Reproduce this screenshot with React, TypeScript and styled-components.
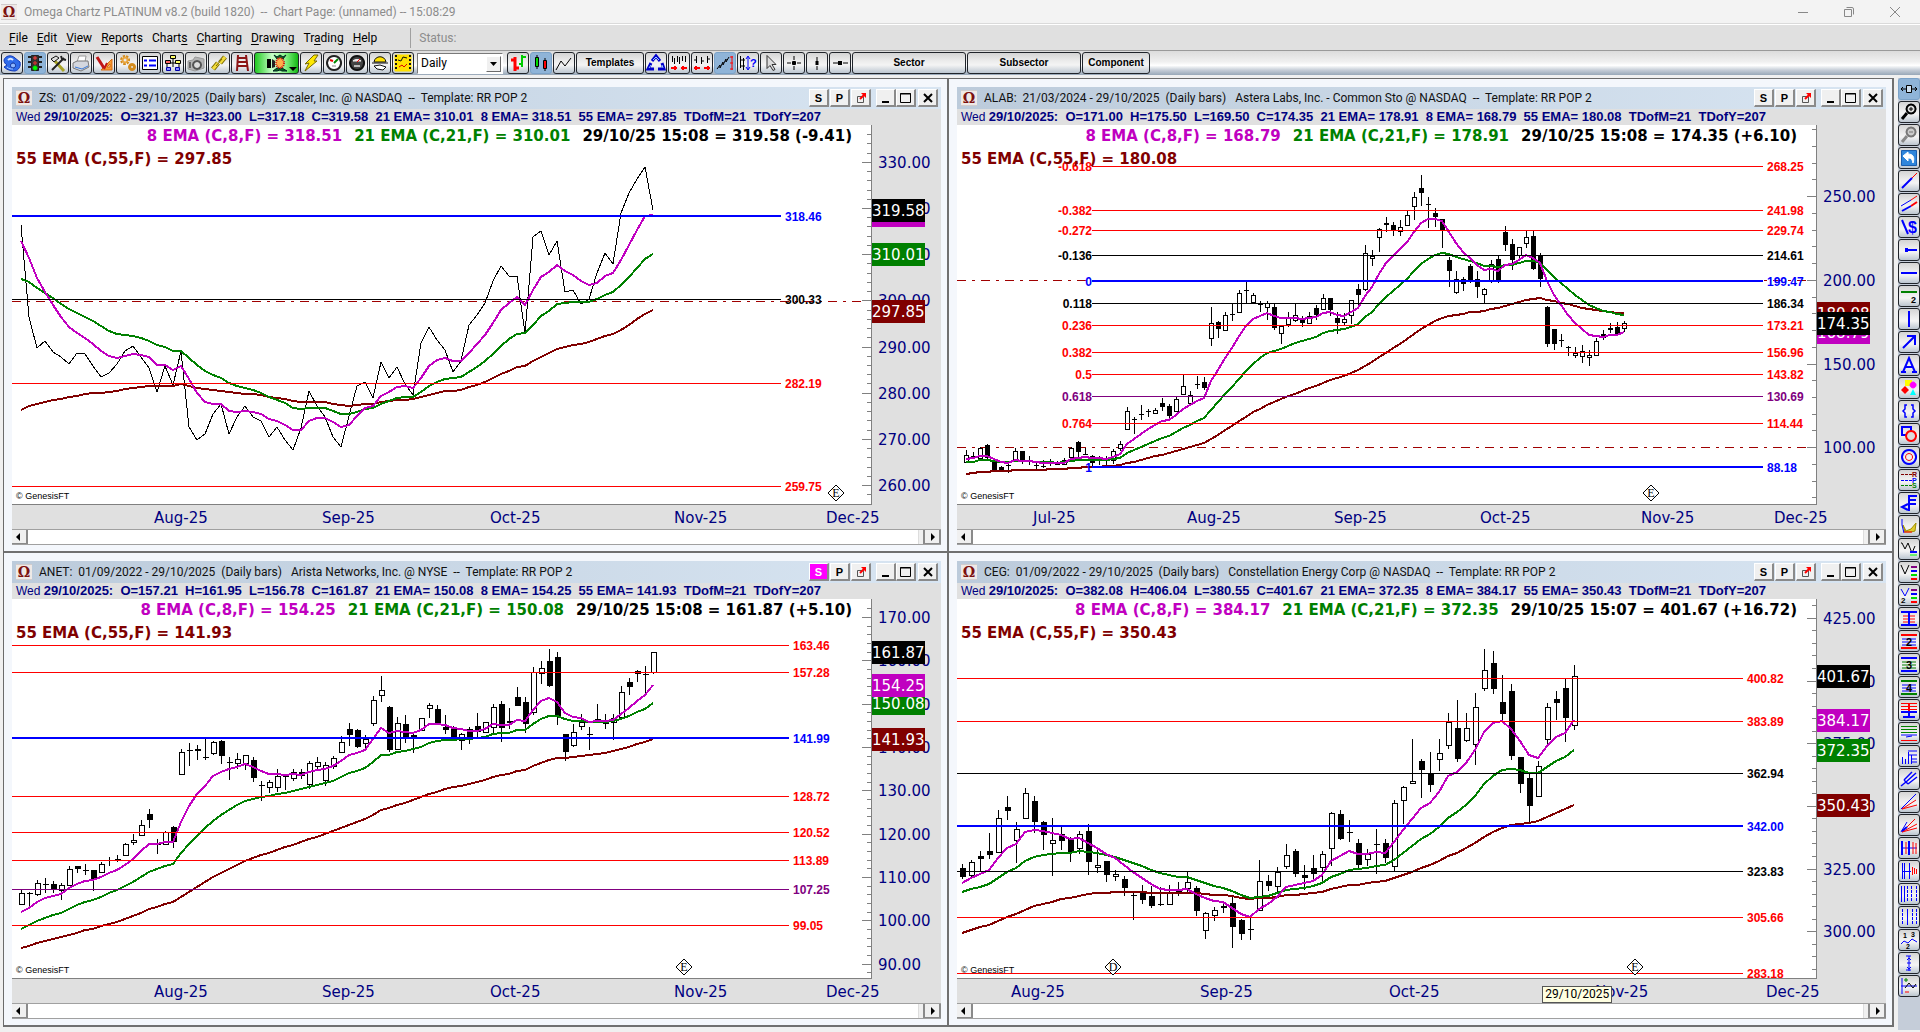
import React, { useLayoutEffect, useRef, useState } from 'react';
import styled, { createGlobalStyle } from 'styled-components';

/* ---------- theme values ---------- */
const UI = '"Segoe UI", Roboto, "Open Sans", sans-serif';
const SANS = 'Arial, "Liberation Sans", sans-serif';
const CASUAL = '"Comic Sans MS", "DejaVu Sans", sans-serif';
const NAVY = '#000080';
const MAROON = '#800000';
const GREEN = '#008000';
const MAGENTA = '#c000c0';
const RED = '#ff0000';
const BLUE = '#0000ff';
const PURPLE = '#800080';
const BLACK = '#000000';
const FACE = '#e0e0e0';

const Global = createGlobalStyle`
  * { box-sizing: border-box; }
  body { margin: 0; background: #f0f0f0; font: 12px/16px ${UI}; color: #000; }
  button, select { font: inherit; color: inherit; padding: 0; margin: 0; }
`;

/* ---------- shell ---------- */
const Shell = styled.div`
  min-height: 100vh;
  display: flex;
  flex-direction: column;
`;
const TitleBar = styled.header`
  height: 24px;
  flex: none;
  display: flex;
  align-items: center;
  gap: 7px;
  padding-left: 1px;
  background: #f3f3f3;
  border-bottom: 1px solid #dadada;
  color: #8c8c8c;
  white-space: pre;
`;
const WindowControls = styled.div`
  margin-left: auto;
  margin-right: 2px;
  display: flex;
`;
const CaptionButton = styled.button`
  width: 46px;
  height: 20px;
  border: 0;
  background: none;
  display: grid;
  place-items: center;
`;
const Omega = styled.span`
  width: 16px;
  height: 16px;
  flex: none;
  display: grid;
  place-items: center;
  background: #efe9e6;
  border-top: 1px solid #d2cccc;
  border-bottom: 1px solid #d2cccc;
  color: #7c1010;
  font: bold 14px/14px "DejaVu Serif", serif;
`;
const MenuBar = styled.nav`
  height: 27px;
  flex: none;
  display: flex;
  align-items: center;
  gap: 9px;
  padding-left: 9px;
  background: ${FACE};
  border-top: 1px solid #fff;
  border-bottom: 1px solid #9a9a9a;
`;
const MenuItem = styled.button`
  border: 0;
  background: none;
  u { text-underline-offset: 2px; }
`;
const Status = styled.span`
  margin-left: 24px;
  padding: 2px 0 2px 8px;
  border-left: 1px solid #a0a0a0;
  color: #8c8c8c;
`;
const Toolbar = styled.div`
  height: 24px;
  flex: none;
  display: flex;
  align-items: center;
  gap: 1px;
  padding: 0 1px;
  background: linear-gradient(#dcdcdc, #f0f0f0 45%, #fff 60%, #c4ccd6 80%, #98a8b8);
`;
const Tool = styled.button<{ $on?: boolean; $go?: boolean; $w?: number }>`
  width: ${(p) => p.$w ?? 22}px;
  height: 22px;
  flex: none;
  display: grid;
  place-items: center;
  border: 1px solid ${(p) => (p.$on ? '#7ba2c8' : '#20242a')};
  border-radius: 3px;
  background: ${(p) =>
    p.$on
      ? '#8fb4d8'
      : p.$go
        ? 'linear-gradient(90deg, #22c922, #c8ffc8 40%, #8cf58c 70%, #12b812)'
        : 'linear-gradient(#d4d4d4, #ececec 40%, #f4f4f4 60%, #bcc6d0)'};
  font: bold 10px/16px ${SANS};
`;
const PeriodBox = styled.span`
  position: relative;
  margin: 0 3px 0 2px;
  width: 86px;
  height: 21px;
`;
const PeriodSelect = styled.select`
  width: 100%;
  height: 100%;
  appearance: none;
  border: 1px solid #7a7a7a;
  border-right-color: #fff;
  border-bottom-color: #fff;
  border-radius: 0;
  background: #fff;
  padding-left: 3px;
  font: 12px/16px ${UI};
`;
const PeriodArrow = styled.span`
  position: absolute;
  right: 2px;
  top: 3px;
  width: 15px;
  height: 16px;
  display: grid;
  place-items: center;
  background: #f0f0f0;
  border: 1px solid #fff;
  border-right-color: #6a6a6a;
  border-bottom-color: #6a6a6a;
  pointer-events: none;
`;
const Body = styled.div`
  flex: 1;
  display: flex;
`;
const Workspace = styled.main`
  flex: 1;
  min-width: 0;
  display: flex;
  padding: 3px 4px 5px 3px;
`;
const Desk = styled.div`
  flex: 1;
  min-width: 0;
  display: grid;
  grid-template-columns: repeat(2, minmax(0, 1fr));
  grid-auto-rows: 1fr;
  border-left: 1px solid #6b6b6b;
  border-top: 1px solid #6b6b6b;
`;
const SideTools = styled.aside`
  width: 22px;
  flex: none;
  margin: 3px 0 2px;
  display: flex;
  flex-direction: column;
  gap: 1px;
  background: #c5cdd9;
`;

/* ---------- chart window ---------- */
const Frame = styled.section`
  display: flex;
  flex-direction: column;
  padding: 8px 6px 6px 8px;
  background: #f4f7fc;
  border: 0 solid #707070;
  border-right-width: 2px;
  border-bottom-width: 2px;
`;
const Caption = styled.div`
  height: 22px;
  flex: none;
  display: flex;
  align-items: center;
  padding: 0 3px 0 4px;
  background: linear-gradient(90deg, #bccbdb, #d8e5f2);
`;
const CaptionText = styled.h2`
  flex: 1;
  margin: 0 0 0 7px;
  min-width: 0;
  overflow: hidden;
  font: 12px/16px ${UI};
  color: #111;
  white-space: pre;
`;
const Group = styled.div<{ $gap: number }>`
  display: flex;
  gap: ${(p) => p.$gap}px;
  margin-left: 5px;
`;
const Bevel = styled.button<{ $hot?: boolean }>`
  width: 20px;
  height: 18px;
  flex: none;
  display: grid;
  place-items: center;
  border: 1px solid #fff;
  border-right: 2px solid #8a8a8a;
  border-bottom: 2px solid #8a8a8a;
  background: ${(p) => (p.$hot ? '#ff00ff' : '#f0f0f0')};
  color: ${(p) => (p.$hot ? '#fff' : '#000')};
  font: bold 11px/12px ${SANS};
`;
const CloseGap = styled.span`
  width: 2px;
`;
const InfoBar = styled.div`
  height: 16px;
  flex: none;
  padding-left: 4px;
  overflow: hidden;
  background: ${FACE};
  color: ${NAVY};
  font: bold 13px/16px ${SANS};
  white-space: pre;
`;
const Wed = styled.span`
  font-size: 12px;
  font-weight: 400;
`;
const Pane = styled.div`
  position: relative;
  flex: 1;
  min-height: 260px;
  min-width: 0;
  background: ${FACE};
`;
const Canvas = styled.svg`
  position: absolute;
  inset: 0;
  display: block;
  width: 100%;
  height: 100%;
  .axis { font: 15px ${CASUAL}; fill: ${NAVY}; }
  .tag { font: 15px ${CASUAL}; fill: #fff; }
  .level { font: bold 12px ${SANS}; }
  .mark { font: 12px "Liberation Serif", serif; }
  .credit { font: 9px ${SANS}; }
`;
const Legend = styled.div`
  position: absolute;
  left: 4px;
  right: 89px;
  top: 0;
  font: bold 15px/23px ${CASUAL};
  white-space: nowrap;
  pointer-events: none;
`;
const LegendRow = styled.div<{ $end?: boolean }>`
  display: flex;
  justify-content: ${(p) => (p.$end ? 'flex-end' : 'flex-start')};
  gap: 12px;
`;
const Study = styled.span<{ $c: string }>`
  color: ${(p) => p.$c};
`;
const DateTip = styled.div`
  position: absolute;
  left: 63%;
  bottom: 0;
  height: 17px;
  padding: 0 2px;
  border: 1px solid #555;
  background: #ffffe1;
  font: 12px/15px ${UI};
`;
const ScrollRow = styled.div`
  height: 16px;
  flex: none;
  display: flex;
  background: #fff;
  border-top: 1px solid #a0a0a0;
  border-bottom: 1px solid #a0a0a0;
`;
const ScrollTrack = styled.div`
  flex: 1;
  display: flex;
  justify-content: flex-end;
`;
const ScrollThumb = styled.span`
  width: 7px;
  background: #f0f0f0;
  border-left: 1px solid #ddd;
  border-right: 2px solid #8a8a8a;
`;
const ScrollButton = styled.button`
  width: 16px;
  border: 0;
  border-right: 2px solid #8a8a8a;
  border-bottom: 1px solid #8a8a8a;
  background: #f0f0f0;
  display: grid;
  place-items: center;
`;

/* ---------- chart data: drawing units are thirds of a pixel ---------- */
type Level = { y: number; c: string; text: string; ratio?: string; bold?: boolean };
type Tag = { y: number; c: string; text: string };
type Chart = {
  id: string;
  caption: string;
  info: string;
  hot?: boolean;
  legend: [string, string, string, string];
  dy: number;
  x0: number;
  step: number;
  seeds: [number, number, number];
  closes?: number[];
  candles?: number[];
  body: number;
  levels: Level[];
  levelX: [number, number];
  dashes: number[];
  axis: { top: number; y: number; by: number; step: number; count: number };
  tags: Tag[];
  months: [string, number][];
  marks: [string, number][];
  tip?: string;
};

const join = (...parts: [number, number[]][]) => parts.flatMap(([d, v]) => v.map((n) => n + d));

const charts: Chart[] = [
  {
    id: 'ZS',
    caption: 'ZS:  01/09/2022 - 29/10/2025  (Daily bars)   Zscaler, Inc. @ NASDAQ  --  Template: RR POP 2',
    info: '29/10/2025:  O=321.37  H=323.00  L=317.18  C=319.58  21 EMA= 310.01  8 EMA= 318.51  55 EMA= 297.85  TDofM=21  TDofY=207',
    legend: ['8 EMA (C,8,F) = 318.51', '21 EMA (C,21,F) = 310.01', '29/10/25 15:08 = 319.58 (-9.41)', '55 EMA (C,55,F) = 297.85'],
    dy: 105,
    x0: 28,
    step: 24,
    seeds: [245, 358, 750],
    body: 6,
    closes: join(
      [60, [135, 413, 504, 485, 517, 532, 553, 520, 523, 560, 592, 579, 553, 514, 499, 532, 565, 637, 560, 615, 515, 742, 780, 762, 703, 673, 764, 712, 679, 711, 724, 772, 742, 780, 811, 745, 634, 680, 712, 772, 802, 710, 618, 606, 655, 547, 595, 563, 612, 645, 490, 442, 480, 511, 577, 545]],
      [0, [495, 465, 430, 363, 320, 349, 349, 520, 232, 214, 286, 245, 398, 391, 432, 418, 340, 281, 313, 160, 100, 58, 22, 150]],
    ),
    levels: [
      { y: 168, c: BLUE, text: '318.46', bold: true },
      { y: 418, c: BLACK, text: '300.33' },
      { y: 670, c: RED, text: '282.19' },
      { y: 979, c: RED, text: '259.75' },
    ],
    levelX: [0, 2307],
    dashes: [424],
    axis: { top: 330, y: 7, by: 10, step: 138.5, count: 8 },
    tags: [
      { y: 166, c: MAGENTA, text: '318.51' },
      { y: 151, c: BLACK, text: '319.58' },
      { y: 283, c: GREEN, text: '310.01' },
      { y: 454, c: MAROON, text: '297.85' },
    ],
    months: [['Aug-25', 426], ['Sep-25', 930], ['Oct-25', 1434], ['Nov-25', 1986], ['Dec-25', 2442]],
    marks: [['E', 2473]],
  },
  {
    id: 'ALAB',
    caption: 'ALAB:  21/03/2024 - 29/10/2025  (Daily bars)   Astera Labs, Inc. - Common Sto @ NASDAQ  --  Template: RR POP 2',
    info: '29/10/2025:  O=171.00  H=175.50  L=169.50  C=174.35  21 EMA= 178.91  8 EMA= 168.79  55 EMA= 180.08  TDofM=21  TDofY=207',
    legend: ['8 EMA (C,8,F) = 168.79', '21 EMA (C,21,F) = 178.91', '29/10/25 15:08 = 174.35 (+6.10)', '55 EMA (C,55,F) = 180.08'],
    dy: 45,
    x0: 29,
    step: 21,
    seeds: [957, 968, 1002],
    body: 5,
    candles: [
      930, 968, 946, 970, 936, 948, 953, 958, 922, 956, 925, 962, 912, 915, 956, 960, 955, 965, 992, 996, 978, 982, 990, 993, 972, 977, 980, 1000, 925, 960, 934, 966,
      933, 935, 968, 974, 950, 965, 967, 976, 968, 976, 979, 995, 961, 979, 981, 986, 957, 969, 970, 980, 964, 973, 976, 977, 955, 974, 961, 976, 921, 952, 925, 956,
      903, 907, 938, 952, 926, 942, 944, 946, 946, 949, 970, 980, 950, 954, 956, 975, 950, 957, 961, 978, 928, 962, 934, 972, 903, 926, 913, 935, 802, 868, 814, 870,
      832, 838, 841, 884, 796, 823, 826, 842, 808, 815, 817, 832, 805, 821, 811, 824, 775, 790, 802, 814, 793, 799, 830, 837, 772, 815, 778, 818, 706, 763, 739, 766,
      753, 790, 766, 794, 709, 733, 736, 748, 712, 727, 746, 752, 502, 595, 550, 620, 544, 547, 569, 596, 517, 571, 526, 574, 490, 523, 525, 545, 451, 517, 460, 519,
      427, 451, 452, 490, 460, 488, 466, 492, 484, 493, 496, 518, 484, 502, 490, 542, 492, 502, 566, 572, 558, 580, 560, 614, 518, 553, 535, 562, 490, 542, 526, 548,
      528, 535, 551, 563, 517, 550, 529, 552, 497, 504, 527, 542, 463, 508, 475, 510, 474, 475, 512, 530, 518, 535, 551, 584, 520, 547, 538, 560, 480, 526, 482, 552,
      433, 448, 467, 505, 316, 448, 340, 453, 331, 355, 349, 380, 265, 292, 268, 336, 232, 250, 257, 278, 247, 256, 271, 290, 241, 274, 263, 290, 212, 256, 226, 260,
      157, 199, 172, 240, 105, 145, 160, 200, 171, 192, 194, 266, 205, 219, 233, 262, 237, 238, 270, 326, 352, 361, 395, 443, 393, 457, 418, 463, 412, 418, 433, 455,
      372, 379, 428, 431, 394, 418, 443, 476, 445, 463, 448, 490, 361, 420, 373, 430, 348, 358, 422, 431, 259, 277, 317, 335, 297, 312, 362, 392, 322, 346, 323, 358,
      271, 311, 292, 325, 273, 289, 389, 391, 340, 346, 419, 443, 500, 502, 613, 623, 568, 568, 614, 632, 583, 600, 604, 623, 619, 622, 624, 650, 622, 646, 640, 656,
      616, 650, 634, 671, 631, 653, 647, 680, 595, 646, 604, 648, 571, 583, 595, 602, 550, 565, 571, 580, 548, 562, 586, 590, 543, 566, 550, 578,
    ],
    levels: [
      { y: 79, c: RED, text: '268.25', ratio: '-0.618' },
      { y: 211, c: RED, text: '241.98', ratio: '-0.382' },
      { y: 271, c: RED, text: '229.74', ratio: '-0.272' },
      { y: 346, c: BLACK, text: '214.61', ratio: '-0.136' },
      { y: 423, c: BLUE, text: '199.47', ratio: '0', bold: true },
      { y: 490, c: BLACK, text: '186.34', ratio: '0.118' },
      { y: 556, c: RED, text: '173.21', ratio: '0.236' },
      { y: 637, c: RED, text: '156.96', ratio: '0.382' },
      { y: 703, c: RED, text: '143.82', ratio: '0.5' },
      { y: 769, c: PURPLE, text: '130.69', ratio: '0.618' },
      { y: 850, c: RED, text: '114.44', ratio: '0.764' },
      { y: 981, c: BLUE, text: '88.18', ratio: '1', bold: true },
    ],
    levelX: [405, 2420],
    dashes: [421, 922],
    axis: { top: 250, y: 170, by: 50, step: 251, count: 4 },
    tags: [
      { y: 520, c: MAROON, text: '180.08' },
      { y: 577, c: MAGENTA, text: '168.79' },
      { y: 550, c: BLACK, text: '174.35' },
    ],
    months: [['Jul-25', 230], ['Aug-25', 691], ['Sep-25', 1131], ['Oct-25', 1571], ['Nov-25', 2054], ['Dec-25', 2453]],
    marks: [['E', 2083]],
  },
  {
    id: 'ANET',
    caption: 'ANET:  01/09/2022 - 29/10/2025  (Daily bars)   Arista Networks, Inc. @ NYSE  --  Template: RR POP 2',
    info: '29/10/2025:  O=157.21  H=161.95  L=156.78  C=161.87  21 EMA= 150.08  8 EMA= 154.25  55 EMA= 141.93  TDofM=21  TDofY=207',
    hot: true,
    legend: ['8 EMA (C,8,F) = 154.25', '21 EMA (C,21,F) = 150.08', '29/10/25 15:08 = 161.87 (+5.10)', '55 EMA (C,55,F) = 141.93'],
    dy: -117,
    x0: 28,
    step: 24,
    seeds: [1056, 1107, 1164],
    body: 6,
    candles: [
      990, 1034, 1000, 1036, 997, 1000, 1002, 1042, 961, 1003, 970, 1010, 955, 974, 977, 1000, 963, 972, 988, 1000, 970, 990, 976, 1022, 919, 976, 928, 980, 918, 919, 929, 941,
      912, 931, 932, 947, 930, 930, 957, 993, 906, 938, 913, 941, 892, 902, 903, 918, 886, 898, 905, 908, 850, 886, 853, 889, 823, 847, 841, 857, 781, 826, 796, 830,
      748, 763, 782, 806, 838, 852, 853, 884, 814, 853, 818, 855, 800, 802, 848, 866, 568, 643, 577, 647, 550, 572, 574, 620, 556, 568, 574, 602, 536, 592, 593, 602,
      544, 580, 547, 586, 540, 544, 590, 614, 592, 607, 608, 661, 580, 610, 598, 627, 586, 610, 587, 632, 592, 601, 655, 668, 663, 675, 676, 725, 662, 682, 668, 701,
      628, 682, 649, 698, 645, 649, 652, 690, 628, 656, 638, 665, 628, 638, 650, 658, 605, 673, 610, 688, 592, 620, 607, 628, 608, 661, 616, 680, 589, 620, 595, 628,
      530, 577, 547, 581, 490, 508, 527, 560, 508, 511, 563, 566, 525, 550, 538, 566, 408, 490, 421, 499, 348, 406, 391, 428, 439, 442, 572, 576, 472, 568, 490, 571,
      466, 492, 535, 551, 518, 526, 532, 580, 476, 510, 476, 515, 430, 444, 436, 475, 436, 448, 490, 494, 466, 502, 510, 524, 500, 503, 532, 545, 520, 541, 523, 572,
      502, 508, 532, 553, 460, 499, 517, 532, 487, 517, 487, 520, 432, 502, 442, 520, 424, 432, 506, 548, 445, 484, 490, 508, 382, 411, 440, 440, 412, 427, 494, 521,
      322, 457, 338, 466, 304, 340, 325, 374, 268, 304, 380, 383, 277, 291, 470, 497, 522, 523, 577, 605, 493, 556, 517, 562, 463, 499, 487, 512, 502, 523, 524, 572,
      432, 478, 480, 485, 463, 490, 484, 509, 463, 487, 475, 541, 379, 472, 397, 475, 354, 367, 383, 405, 331, 334, 344, 368, 319, 344, 346, 403, 277, 337, 277, 344,
    ],
    levels: [
      { y: 256, c: RED, text: '163.46' },
      { y: 337, c: RED, text: '157.28' },
      { y: 534, c: BLUE, text: '141.99', bold: true },
      { y: 709, c: RED, text: '128.72' },
      { y: 817, c: RED, text: '120.52' },
      { y: 901, c: RED, text: '113.89' },
      { y: 988, c: PURPLE, text: '107.25' },
      { y: 1096, c: RED, text: '99.05' },
    ],
    levelX: [0, 2331],
    dashes: [],
    axis: { top: 170, y: 172, by: 10, step: 130, count: 9 },
    tags: [
      { y: 430, c: GREEN, text: '150.08' },
      { y: 277, c: BLACK, text: '161.87' },
      { y: 376, c: MAGENTA, text: '154.25' },
      { y: 538, c: MAROON, text: '141.93' },
    ],
    months: [['Aug-25', 426], ['Sep-25', 930], ['Oct-25', 1434], ['Nov-25', 1986], ['Dec-25', 2442]],
    marks: [['E', 2017]],
  },
  {
    id: 'CEG',
    caption: 'CEG:  01/09/2022 - 29/10/2025  (Daily bars)   Constellation Energy Corp @ NASDAQ  --  Template: RR POP 2',
    info: '29/10/2025:  O=382.08  H=406.04  L=380.55  C=401.67  21 EMA= 372.35  8 EMA= 384.17  55 EMA= 350.43  TDofM=21  TDofY=207',
    legend: ['8 EMA (C,8,F) = 384.17', '21 EMA (C,21,F) = 372.35', '29/10/25 15:07 = 401.67 (+16.72)', '55 EMA (C,55,F) = 350.43'],
    dy: -117,
    x0: 15,
    step: 27,
    seeds: [971, 998, 1119],
    body: 6,
    candles: [
      913, 924, 952, 959, 901, 946, 907, 955, 873, 888, 898, 937, 820, 874, 886, 898, 750, 877, 776, 880, 709, 742, 754, 782, 787, 841, 808, 911, 685, 776, 700, 779,
      709, 724, 788, 820, 783, 787, 827, 872, 775, 851, 841, 950, 802, 824, 845, 872, 832, 836, 878, 906, 814, 865, 823, 883, 793, 814, 908, 947, 868, 921, 916, 941,
      903, 904, 947, 968, 930, 949, 943, 965, 949, 958, 986, 1010, 998, 1006, 1009, 1080, 976, 998, 1021, 1034, 978, 1008, 1040, 1046, 981, 1033, 1036, 1040, 976, 1034, 1000, 1036,
      967, 990, 1000, 1010, 937, 986, 967, 997, 978, 984, 1055, 1070, 1057, 1111, 1060, 1138, 1042, 1067, 1051, 1085, 1027, 1039, 1046, 1060, 1012, 1030, 1103, 1165, 1078, 1081, 1123, 1142,
      1072, 1108, 1109, 1142, 901, 1051, 964, 1053, 946, 964, 980, 995, 922, 980, 937, 998, 853, 919, 886, 929, 868, 874, 944, 952, 916, 946, 956, 992, 886, 925, 944, 960,
      874, 922, 883, 968, 757, 865, 760, 918, 750, 763, 839, 842, 781, 818, 820, 847, 838, 850, 916, 928, 868, 898, 883, 918, 808, 853, 856, 944, 838, 850, 896, 911,
      721, 919, 730, 935, 678, 721, 682, 792, 538, 670, 664, 674, 598, 604, 632, 716, 577, 641, 677, 698, 538, 598, 580, 635, 460, 556, 487, 569, 421, 504, 598, 608,
      460, 541, 505, 548, 400, 553, 442, 617, 268, 385, 331, 395, 274, 310, 389, 404, 347, 427, 463, 490, 373, 394, 590, 602, 592, 592, 674, 701, 643, 655, 740, 790,
      605, 709, 619, 710, 430, 538, 442, 553, 394, 417, 430, 482, 356, 384, 476, 548, 316, 496, 349, 510,
    ],
    levels: [
      { y: 355, c: RED, text: '400.82' },
      { y: 484, c: RED, text: '383.89' },
      { y: 640, c: BLACK, text: '362.94' },
      { y: 798, c: BLUE, text: '342.00', bold: true },
      { y: 934, c: BLACK, text: '323.83' },
      { y: 1072, c: RED, text: '305.66' },
      { y: 1240, c: RED, text: '283.18' },
    ],
    levelX: [0, 2360],
    dashes: [],
    axis: { top: 425, y: 175, by: 25, step: 188, count: 6 },
    tags: [
      { y: 349, c: BLACK, text: '401.67' },
      { y: 481, c: MAGENTA, text: '384.17' },
      { y: 571, c: GREEN, text: '372.35' },
      { y: 736, c: MAROON, text: '350.43' },
    ],
    months: [['Aug-25', 163], ['Sep-25', 729], ['Oct-25', 1298], ['Nov-25', 1916], ['Dec-25', 2429]],
    marks: [['D', 469], ['E', 2035]],
    tip: '29/10/2025',
  },
];

/* ---------- chart drawing ---------- */
const PRICE_W = 69;
const DATE_H = 25;
const BASE_W = 859 * 3;
const BASE_H = 379 * 3;

const ema = (closes: number[], period: number, seed: number) => {
  const k = 2 / (period + 1);
  let v = seed;
  return closes.map((c, i) => (i === 0 ? v : (v = v + k * (c - v))));
};

function ChartPane({ chart }: { chart: Chart }) {
  const box = useRef<HTMLDivElement>(null);
  const [size, setSize] = useState({ w: 928, h: 404 });
  useLayoutEffect(() => {
    const el = box.current;
    if (!el) return;
    const read = () => setSize({ w: el.clientWidth, h: el.clientHeight });
    read();
    const ro = new ResizeObserver(read);
    ro.observe(el);
    return () => ro.disconnect();
  }, []);

  const pw = size.w - PRICE_W - (size.w % 2);
  const ph = size.h - DATE_H;
  const X = (v: number) => Math.floor((v * pw) / BASE_W);
  const Y = (v: number) => Math.floor(((v + chart.dy) * ph) / BASE_H);
  const bars = chart.candles
    ? Array.from({ length: chart.candles.length / 4 }, (_, i) => chart.candles!.slice(i * 4, i * 4 + 4))
    : [];
  const closes = chart.closes ?? bars.map((b) => b[2]);
  const bx = (i: number) => X(chart.x0 + i * chart.step);
  const line = (v: number[]) => v.map((y, i) => `${bx(i)},${Y(y)}`).join(' ');
  const { axis } = chart;
  const ticks: { y: number; major: boolean }[] = [];
  for (let i = -20; i < axis.count * 5 + 5; i++) {
    const y = Y(axis.y + (i * axis.step) / 5);
    if (y > 3 && y < ph - 1) ticks.push({ y, major: i % 5 === 0 && i >= 0 });
  }
  const clip = `plot-${chart.id}`;

  return (
    <Pane ref={box}>
      <Canvas role="img" aria-label={`${chart.id} daily chart`}>
        <clipPath id={clip}>
          <rect width={pw} height={ph} />
        </clipPath>
        <rect width={pw} height={ph} fill="#fff" />
        <g clipPath={`url(#${clip})`} shapeRendering="crispEdges">
          {chart.dashes.map((y) => (
            <path key={y} d={`M0 ${Y(y) + 0.5}H${pw - 6}`} stroke="#a00000" strokeDasharray="9 6 3 6" />
          ))}
          {bars.map(([h, o, c, l], i) => {
            const x = bx(i);
            const top = Y(Math.min(o, c));
            const bot = Math.max(Y(Math.max(o, c)), top + 1);
            const up = c < o;
            return (
              <g key={i}>
                <rect x={x} y={Y(h)} width={1} height={Math.max(1, Y(l) - Y(h))} />
                {up && bot - top > 1 ? (
                  <rect x={x - 1.5} y={top + 0.5} width={chart.body - 1} height={bot - top} fill="#fff" stroke="#000" />
                ) : (
                  <rect x={x - 2} y={top} width={chart.body} height={bot - top} />
                )}
              </g>
            );
          })}
          {chart.closes && <polyline points={line(closes)} fill="none" stroke="#000" />}
          <g fill="none" strokeWidth={2}>
            <polyline points={line(ema(closes, 55, chart.seeds[2]))} stroke={MAROON} />
            <polyline points={line(ema(closes, 21, chart.seeds[1]))} stroke={GREEN} />
            <polyline points={line(ema(closes, 8, chart.seeds[0]))} stroke={MAGENTA} />
          </g>
          {chart.levels.map((l) => (
            <rect
              key={l.y}
              x={X(chart.levelX[0])}
              y={Y(l.y) - (l.bold ? 1 : 0)}
              width={X(chart.levelX[1]) - X(chart.levelX[0])}
              height={l.bold ? 2 : 1}
              fill={l.c}
            />
          ))}
          {chart.marks.map(([t, x]) => (
            <path key={t} d={`M${X(x)} ${ph - 19}l8 8l-8 8l-8 -8z`} fill="#fff" stroke="#000" shapeRendering="auto" />
          ))}
        </g>
        <g clipPath={`url(#${clip})`}>
          {chart.levels.map((l) => (
            <g key={l.y} className="level" fill={l.c}>
              <text x={X(chart.levelX[1]) + 4} y={Y(l.y) + 5}>{l.text}</text>
              {l.ratio && <text x={X(chart.levelX[0])} y={Y(l.y) + 5} textAnchor="end">{l.ratio}</text>}
            </g>
          ))}
          {chart.marks.map(([t, x]) => (
            <text key={t} className="mark" x={X(x)} y={ph - 7} textAnchor="middle">{t}</text>
          ))}
          <text className="credit" x={4} y={ph - 5}>© GenesisFT</text>
        </g>
        <g fill="none" stroke="#808080" shapeRendering="crispEdges">
          <path d={`M0 ${ph + 0.5}H${pw + 0.5}V0`} />
          {ticks.map((t) => (
            <path key={t.y} d={`M${pw} ${t.y + 0.5}h${t.major ? -9 : -4}`} />
          ))}
        </g>
        {Array.from({ length: axis.count }, (_, i) => (
          <text key={i} className="axis" x={pw + 7} y={Y(axis.y + i * axis.step) + 6}>
            {(axis.top - i * axis.by).toFixed(2)}
          </text>
        ))}
        {chart.tags.map((t) => (
          <g key={t.text}>
            <rect x={pw + 1} y={Y(t.y) - 11} width={53} height={23} fill={t.c} />
            <text className="tag" x={pw + 1} y={Y(t.y) + 6}>{t.text}</text>
          </g>
        ))}
        {chart.months.map(([m, x]) => (
          <text key={m} className="axis" x={X(x)} y={ph + 19}>{m}</text>
        ))}
      </Canvas>
      <Legend>
        <LegendRow $end>
          <Study $c={MAGENTA}>{chart.legend[0]}</Study>
          <Study $c={GREEN}>{chart.legend[1]}</Study>
          <Study $c={BLACK}>{chart.legend[2]}</Study>
        </LegendRow>
        <LegendRow>
          <Study $c={MAROON}>{chart.legend[3]}</Study>
        </LegendRow>
      </Legend>
      {chart.tip && <DateTip>{chart.tip}</DateTip>}
    </Pane>
  );
}

/* ---------- icons: [path, stroke, width, fill, dash] on a 22 unit grid ---------- */
type Stroke = [string, string, number?, string?, string?];
type Glyph = { name: string; s: Stroke[]; t?: [string, number, number, string, number][]; on?: boolean };

const Icon = ({ g }: { g: Glyph }) => (
  <svg width="20" height="20" viewBox="1 1 20 20" aria-hidden="true">
    {g.s.map(([d, stroke, w = 1, fill = 'none', dash], i) => (
      <path key={i} d={d} stroke={stroke} strokeWidth={w} fill={fill} strokeDasharray={dash} />
    ))}
    {g.t?.map(([c, x, y, fill, size]) => (
      <text key={c} x={x} y={y} fill={fill} fontSize={size} fontWeight="bold" fontFamily="Liberation Sans, sans-serif">{c}</text>
    ))}
  </svg>
);

const leftTools: Glyph[] = [
  { name: 'Connect', s: [['M3 8c1-4 7-6 11-2l5 4c1 4-1 8-5 9-4 0-8-1-11-4l3-2c-2-1-3-3-3-5z', '#1238b8', 1, '#2f6bea'], ['M7 8c2-2 4-1 5 0', '#dbe8ff', 2], ['M12 11a2.500 2.500 0 1 0 .1 0z', '#0d2a90', 1, '#8fb8ff'], ['M6 15c2 2 4 2 6 2', '#9cc0ff', 1]] },
  { name: 'Trade status', on: true, s: [['M7.500 3.500h7v15h-7z', '#222', 1, '#333'], ['M4 5h3M4 10h3M4 15h3M15 5h3M15 10h3M15 15h3', '#222', 2], ['M11 4.500a1.500 1.500 0 1 0 .1 0z', '#b33', 1, '#c44'], ['M11 9.500a1.500 1.500 0 1 0 .1 0z', '#a33', 1, '#b33'], ['M11 14a2 2 0 1 0 .1 0z', '#0e0', 1, '#0f0']] },
  { name: 'Tools', s: [['M7 8l10 11', '#a9a427', 3], ['M17 6L5 18', '#222', 2], ['M4 7l5-3 3 2-5 4z', '#111', 1, '#ddd'], ['M14 4l1 3 4 1', '#222', 2]] },
  { name: 'Print', s: [['M7 10l2-6h7l-1 6', '#999', 1, '#fff'], ['M3 11l4-2h11l1 6-8 4-8-3z', '#777', 1, '#d4d7de'], ['M5 15l7 2 6-3', '#3a7ad8', 1]] },
  { name: 'Design', s: [['M8 18l11-11v11z', '#d86b10', 1, '#f59a32'], ['M14 15l3-3v3z', '#d86b10', 1, '#f4f4f4'], ['M4 5l7 11', '#c01515', 3], ['M11 17l3-6', '#c01515', 2]] },
  { name: 'Settings', s: [['M9 4.500a3.500 3.500 0 1 0 .1 0z', '#d28a1c', 3, 'none', '2 1'], ['M9 5.500a2.500 2.500 0 1 0 .1 0z', '#e8a640', 2], ['M16 12.500a2.500 2.500 0 1 0 .1 0z', '#d28a1c', 3]] },
  { name: 'List', s: [['M3.500 4.500h15v13h-15z', '#000', 1, '#fff'], ['M5 8.500h3M5 13.500h3M10 8.500h7M10 13.500h7', '#00f', 2]] },
  { name: 'Tree', s: [['M11 7v4M5 15v-4h12v4M11 11v4', '#000', 1], ['M8.500 3.500h5v3h-5z', '#000', 1, '#ff6'], ['M3.500 8.500h5v3h-5z', '#000', 1, '#f66'], ['M13.500 8.500h5v3h-5z', '#000', 1, '#ff6'], ['M4.500 15.500h4v3h-4zM13.500 15.500h4v3h-4z', '#00a', 1, '#88f']] },
  { name: 'Snapshot', s: [['M3 9l5-1 2-3 5 1 4 1v9l-9 3-7-2z', '#999', 1, '#b5b5b5'], ['M12 9a4 4 0 1 0 .1 0z', '#555', 2, '#ddd'], ['M5 10v6', '#666', 2]] },
  { name: 'Link', s: [['M5 17l5-6M12 11l5-6', '#7a6a00', 5], ['M5 17l5-6M12 11l5-6', '#f3dc3a', 3], ['M8 14l6-7', '#7a6a00', 1]] },
  { name: 'Ladder', s: [['M7 3l-1 16M15 3l2 16M7 6h9M7 10h9M6 14h11', '#8c1515', 2]] },
];
const midTools: Glyph[] = [
  { name: 'Quick', s: [['M14 3l4 0-4 6 3 0L5 19l4-8-4 1z', '#776a00', 1, '#ffe800']] },
  { name: 'Gauge', s: [['M11 4a7 7 0 1 0 .1 0z', '#222', 2, '#fff'], ['M11 11l4-4', '#080', 2], ['M7 8l3 1', '#e00', 2], ['M9 14h4', '#888', 1]] },
  { name: 'Meter', s: [['M11 4a7 7 0 1 0 .1 0z', '#111', 2, '#444'], ['M7 9a5 4 0 0 1 8 0z', '#eee', 1, '#eee'], ['M11 10l3-3', '#f00', 1], ['M8 14h6', '#bbb', 2]] },
  { name: 'Service', s: [['M5 10c1-7 11-7 12 0z', '#111', 1, '#ffe100'], ['M3 11h16', '#111', 1], ['M5 14l6-1 6 2-3 3-6-1z', '#111', 1, '#fff']] },
  { name: 'Film', s: [['M3 3h16v16H3z', '#ffe100', 1, '#ffe100'], ['M4 3v16M18 3v16', '#111', 2, 'none', '2 2'], ['M6 8l3 1 2-4 4 1', '#111', 1], ['M7 15l3-2 2 2 3-3', '#d00', 1]] },
];
const styleTools: Glyph[] = [
  { name: 'Bars', s: [['M8 5v14M4 8h4M8 16h4', '#f00', 3], ['M15 3v12M15 5h4M12 12h3', '#0c0', 2]] },
  { name: 'Candles', on: true, s: [['M7 3v14M15 6v13', '#000', 1], ['M5.500 5.500h3v9h-3z', '#000', 1, '#0d0'], ['M13.500 8.500h3v8h-3z', '#000', 1, '#f00']] },
  { name: 'Line', s: [['M3 18l5-9 4 5 6-8', '#000', 1]] },
];
const scaleTools: Glyph[] = [
  { name: 'Recycle', s: [['M7 9l4-5 4 5M17 11l2 6h-6M9 17H3l3-6', '#00c', 3], ['M8 8l3-3 3 3M17 13l1 3M4 16l2-3', '#9cf', 1]] },
  { name: 'Compress', s: [['M4.500 4v6M6.500 6v6M9.500 4v6M11.500 5v7M14.500 4v5M17.500 4v6', '#000', 1], ['M3 16h6M13 16h6M7 14v4M15 14v4', '#f00', 2]] },
  { name: 'Expand', s: [['M5.500 4v7M10.500 5v7M16.500 4v7M3 8h3M10 9h3M16 7h3', '#000', 1], ['M3 16h6M13 16h6M5 14v4M17 14v4', '#f00', 2]] },
  { name: 'Auto scale', on: true, s: [['M3 17l3-4v3l3-6v3l3-6v3l3-5', '#000', 1], ['M18 4v14M16 5h3M16 17h3M16 11h3', '#f00', 1]] },
  { name: 'Help scale', s: [['M3.500 4v12M6.500 6v12M3 8h5M3 14h5', '#000', 1], ['M11 5v12M9 7l2-3 2 3M9 15l2 3 2-3', '#00f', 1]], t: [['?', 13, 15, '#00f', 11]] },
  { name: 'Pointer', s: [['M7 3.500v13l3-3 3 5 2-1-3-5h4z', '#333', 1, '#ddd']] },
  { name: 'Cross', s: [['M11 4v4M11 14v4M4 11h4M14 11h4', '#000', 1], ['M11 9v4M9 11h4', '#000', 3]] },
  { name: 'Vertical', s: [['M11 5v4M11 14v4', '#000', 1], ['M11 9v4M9.500 11h3', '#000', 3]] },
  { name: 'Horizontal', s: [['M4 11h5M14 11h5', '#000', 1], ['M9 11h4', '#000', 4]] },
];

const B = '#0000ff';
const R = '#ff0000';
const G = '#008000';
const K = '#000000';
const sideTools: Glyph[] = [
  { name: 'Pan', on: true, s: [['M8.500 7.500h5v7h-5z', K, 1, '#cfe0f0'], ['M3 11h5M14 11h5M5 9l-2 2 2 2M17 9l2 2-2 2', K, 1]] },
  { name: 'Zoom in', s: [['M13 3.500a4.500 4.500 0 1 0 .1 0z', K, 2, '#ddd'], ['M11 8h4M13 6v4', K, 1], ['M4 18l5-6', K, 3]] },
  { name: 'Zoom out', s: [['M13 3.500a4.500 4.500 0 1 0 .1 0z', '#777', 2, '#ccc'], ['M11 8h4', '#777', 1], ['M4 18l5-6', '#888', 3]] },
  { name: 'Undo', s: [['M3.500 3.500h15v15h-15z', '#1a5fb0', 1, '#2f86dc'], ['M5 9l5-4v2c5 0 7 3 5 9-1-4-2-5-5-5v3z', '#fff', 1, '#fff']] },
  { name: 'Trend line', s: [['M4 18l10-10', B, 2], ['M14 8l5-5', R, 1]] },
  { name: 'Parallel lines', s: [['M3 13l10-6', B, 1], ['M13 7l6-4', R, 1], ['M4 18l9-5', B, 2], ['M13 13l6-4', R, 2]] },
  { name: 'Money line', s: [['M4 4l6 14', B, 2]], t: [['$', 10, 17, B, 16]] },
  { name: 'Ray', s: [['M7 11h12', B, 2], ['M7 11h3', B, 4]] },
  { name: 'Horizontal line', s: [['M3 11h16', B, 2]] },
  { name: 'Two levels', s: [['M3 7h16', G, 2]], t: [['2', 13, 18, K, 9]] },
  { name: 'Vertical line', s: [['M11 3v16', B, 2]] },
  { name: 'Arrow', s: [['M5 17L17 5M9 5h8v9', B, 2]] },
  { name: 'Text', s: [['M5 18l6-14 6 14M7 13h8M3 18h5M14 18h5', B, 2]] },
  { name: 'Shapes', s: [['M7 3h7v6H7z', '#ff0', 0, '#ff0'], ['M15 5a3 3 0 1 0 .1 0z', '#f0f', 1, '#f0f'], ['M7 9l4 4-4 4-4-4z', R, 0, R], ['M15 12l3 6h-6z', '#0ff', 0, '#0ff']] },
  { name: 'Braces', s: [['M9 5H7v4l-2 2 2 2v4h2M13 5h2v4l2 2-2 2v4h-2', B, 1.5]] },
  { name: 'Figures', s: [['M4 4h9v8H4z', B, 2], ['M13 8a5 5 0 1 0 .1 0z', R, 2, '#ddd']] },
  { name: 'Circles', s: [['M11 4a7 7 0 1 0 .1 0z', B, 2], ['M11 7.500a3.500 3.500 0 1 0 .1 0z', R, 1]] },
  { name: 'Pivots', s: [['M3 5.500h11', MAROON, 1, 'none', '3 1'], ['M3 11.500h11', B, 1, 'none', '3 1'], ['M3 16.500h11', G, 1, 'none', '3 1']], t: [['R', 14, 8, MAROON, 7], ['P', 14, 14, B, 7], ['S', 14, 19, G, 7]] },
  { name: 'Profile', s: [['M11 3v16M11 4h8M11 8h7M11 12h7', B, 2], ['M10 12l-6 3 6 3', B, 2]] },
  { name: 'Curve', s: [['M5 10l3 6 5-2 5-6-1 8-4 1-6 0z', '#a09000', 1, '#e0cc30'], ['M4 4v6l2 8', B, 1], ['M6 17h8', R, 1]] },
  { name: 'Zigzag', s: [['M3 5h1l3 6 3-6 4 10 3-7', K, 1], ['M12 14h7', B, 2], ['M12 17h7', '#0f0', 1]] },
  { name: 'Retrace', s: [['M3 4l4 9 4-9', K, 1], ['M13 6h6', PURPLE, 2], ['M13 10h6', B, 2], ['M13 14h6', '#0d0', 2], ['M13 18h6', R, 2]] },
  { name: 'Retrace 2', s: [['M3 5l4 7 4-8', B, 1], ['M13 6h6', PURPLE, 2], ['M13 10h6', B, 2], ['M13 14h6', '#0d0', 2], ['M13 18h6', R, 2]], t: [['2', 3, 19, K, 8]] },
  { name: 'Fib 1', s: [['M3 5h16M3 18h16', B, 2], ['M5 9h12M5 12h12M5 15h12', R, 1], ['M11 5v13', B, 2]] },
  { name: 'Fib 2', s: [['M3 5h16M3 18h16', R, 2], ['M4 9h14M4 12h14M4 15h14', B, 1]], t: [['2', 8, 16, K, 11]] },
  { name: 'Fib 3', s: [['M3 5h16M3 18h16', B, 2], ['M4 9h14M4 12h14M4 15h14', G, 1]], t: [['3', 8, 16, K, 11]] },
  { name: 'Fib 4', s: [['M3 5h16M3 18h16', G, 2], ['M4 9h14M4 12h14M4 15h14', B, 1]], t: [['4', 8, 16, K, 11]] },
  { name: 'Extension', s: [['M3 4.500h16M3 7.500h16M3 10.500h16', R, 1], ['M11 4v8', R, 2], ['M3 13h16M5 18h12M11 13v5', B, 2]] },
  { name: 'Grid lines', s: [['M3 4.500h16M3 7.500h16M3 10.500h16', G, 1], ['M3 13h16M8 15l6-1', B, 1], ['M3 18.500h16', R, 1]] },
  { name: 'Volume', s: [['M4.500 12v7M7.500 14v5M10.500 7v12M13.500 10v9', B, 1], ['M10 6h9M10 10h9M13 14h6M13 17h6', B, 1]] },
  { name: 'Pitchfork', s: [['M6 12l8-8M8 14l10-9M10 16l9-7M6 12l4 4M3 18l5-4', B, 1.5]] },
  { name: 'Fan', s: [['M3 18L18 3', B, 1], ['M4 18l14-9M4 18l15-4', R, 1]] },
  { name: 'Speed fan', s: [['M3 18l6-10', B, 1], ['M4 18L17 5M4 18l15-8M4 18l15-4', R, 1], ['M4 17l5-4', B, 2]] },
  { name: 'Cycles', s: [['M4 4v14M11 4v14', B, 2], ['M4 11h15', B, 1], ['M8 5v12M15 5v12M18 6v11', R, 1]] },
  { name: 'Time zones', s: [['M4.500 3v16M6.500 3v16M11.500 3v16', B, 1], ['M4 11.500h9', B, 1], ['M14.500 7v8M16.500 8v6M18.500 9v5', R, 1]] },
  { name: 'Time grid', s: [['M3.500 3v16M6.500 3v16', B, 1], ['M9.500 3v16M13.500 3v16M18.500 3v16', B, 1, 'none', '3 1']] },
  { name: 'Time grid 2', s: [['M9.500 3v16', B, 1], ['M4.500 3v16M14.500 3v16M18.500 3v16', B, 1, 'none', '3 1']] },
  { name: 'Elliott', s: [['M3 15l3-3 4 2 4-4 5 3', B, 1]], t: [['1', 5, 9, K, 7], ['3', 13, 8, K, 7], ['2', 8, 20, K, 7]] },
  { name: 'Measure', s: [['M11 4v15M8 4h5M8 18h5M9 8l2-2 2 2M9 15l2 2 2-2M9 11h4', B, 1]] },
  { name: 'Oscillator', s: [['M4 3v16M3 11h16', B, 1], ['M7 13l4-5 4 5 3-4', K, 1], ['M6 5h4M8 3v4', G, 1], ['M7 17h4', R, 1]] },
];

const menus: [string, string, string][] = [
  ['', 'F', 'ile'], ['', 'E', 'dit'], ['', 'V', 'iew'], ['', 'R', 'eports'], ['Chart', 's', ''],
  ['', 'C', 'harting'], ['', 'D', 'rawing'], ['Tr', 'a', 'ding'], ['', 'H', 'elp'],
];

const ToolSet = ({ items }: { items: Glyph[] }) => (
  <>
    {items.map((g) => (
      <Tool key={g.name} $on={g.on} aria-label={g.name}>
        <Icon g={g} />
      </Tool>
    ))}
  </>
);

function ChartWindow({ chart }: { chart: Chart }) {
  return (
    <Frame>
      <Caption>
        <Omega aria-hidden="true">Ω</Omega>
        <CaptionText>{chart.caption}</CaptionText>
        <Group $gap={1}>
          <Bevel $hot={chart.hot}>S</Bevel>
          <Bevel>P</Bevel>
          <Bevel aria-label="Detach">
            <svg width="12" height="12" viewBox="0 0 12 12">
              <path d="M2.500 4.500h6v6h-6z" fill="none" stroke="#555" />
              <path d="M5 7l4-4" fill="none" stroke="#f00" strokeWidth="2" />
              <path d="M6 1h5v5z" fill="#f00" />
            </svg>
          </Bevel>
        </Group>
        <Group $gap={0}>
          <Bevel aria-label="Minimize">
            <svg width="12" height="12"><path d="M2 10h7" stroke="#000" strokeWidth="2" /></svg>
          </Bevel>
          <Bevel aria-label="Maximize">
            <svg width="12" height="12"><path d="M.5 1.500h10v9H.5zM0 2h11" fill="none" stroke="#000" /></svg>
          </Bevel>
          <CloseGap />
          <Bevel aria-label="Close">
            <svg width="12" height="12"><path d="M2 2l8 8M10 2l-8 8" stroke="#000" strokeWidth="2" /></svg>
          </Bevel>
        </Group>
      </Caption>
      <InfoBar><Wed>Wed </Wed>{chart.info}</InfoBar>
      <ChartPane chart={chart} />
      <ScrollRow>
        <ScrollButton aria-label="Scroll left">
          <svg width="8" height="8"><path d="M5 0v8L1 4z" /></svg>
        </ScrollButton>
        <ScrollTrack><ScrollThumb /></ScrollTrack>
        <ScrollButton aria-label="Scroll right">
          <svg width="8" height="8"><path d="M3 0v8l4-4z" /></svg>
        </ScrollButton>
      </ScrollRow>
    </Frame>
  );
}

export default function App() {
  return (
    <Shell>
      <Global />
      <TitleBar>
        <Omega aria-hidden="true">Ω</Omega>
        <span>Omega Chartz PLATINUM v8.2 (build 1820)  --  Chart Page: (unnamed) -- 15:08:29</span>
        <WindowControls>
          <CaptionButton aria-label="Minimize">
            <svg width="10" height="10"><path d="M0 5.500h10" stroke="#888" /></svg>
          </CaptionButton>
          <CaptionButton aria-label="Restore">
            <svg width="10" height="10" fill="none" stroke="#888"><path d="M.5 2.500h7v7h-7z" /><path d="M2.500 .5h5.500a1.500 1.500 0 0 1 1.500 1.500v5.500" /></svg>
          </CaptionButton>
          <CaptionButton aria-label="Close">
            <svg width="10" height="10"><path d="M0 0l10 10M10 0L0 10" stroke="#888" /></svg>
          </CaptionButton>
        </WindowControls>
      </TitleBar>
      <MenuBar>
        {menus.map(([a, u, b]) => (
          <MenuItem key={a + u + b}>{a}<u>{u}</u>{b}</MenuItem>
        ))}
        <Status>Status:</Status>
      </MenuBar>
      <Toolbar>
        <ToolSet items={leftTools} />
        <Tool $go $w={45} aria-label="Scan">
          <svg width="41" height="20" viewBox="0 0 41 20">
            <path d="M11 6h4v9h-4z" fill="#000" />
            <path d="M16 6l3 2v6l-3 1z" fill="#222" />
            <path d="M18 2l3 2 3-2 3 2 3-2-3 4h-6zM17 18l4-3h5l5 3h-5l-2-1-3 1z" fill="#046a1c" stroke="#022" />
            <ellipse cx="24" cy="10" rx="4" ry="5" fill="#ffb04a" />
            <ellipse cx="24" cy="10" rx="4" ry="5" fill="none" stroke="#d01010" strokeWidth="2" strokeDasharray="1 1" />
            <path d="M33 14h8l-4 4z" fill="#000" />
          </svg>
        </Tool>
        <ToolSet items={midTools} />
        <PeriodBox>
          <PeriodSelect aria-label="Bar period" defaultValue="Daily">
            <option>Daily</option>
            <option>Weekly</option>
            <option>Monthly</option>
          </PeriodSelect>
          <PeriodArrow><svg width="7" height="4"><path d="M0 0h7L3.500 4z" /></svg></PeriodArrow>
        </PeriodBox>
        <ToolSet items={styleTools} />
        <Tool $w={68}>Templates</Tool>
        <ToolSet items={scaleTools} />
        <Tool $w={114}>Sector</Tool>
        <Tool $w={114}>Subsector</Tool>
        <Tool $w={68}>Component</Tool>
      </Toolbar>
      <Body>
        <Workspace>
          <Desk>
            {charts.map((c) => (
              <ChartWindow key={c.id} chart={c} />
            ))}
          </Desk>
        </Workspace>
        <SideTools>
          <ToolSet items={sideTools} />
        </SideTools>
      </Body>
    </Shell>
  );
}
